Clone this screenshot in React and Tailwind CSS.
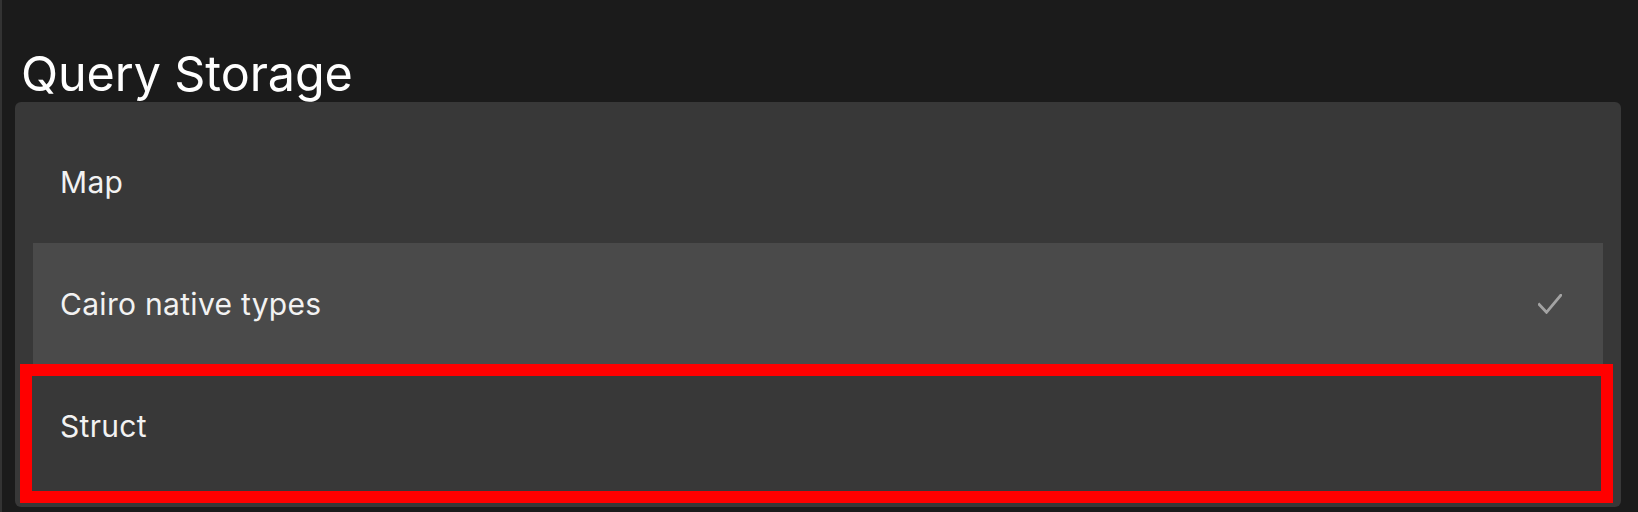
export default function App() {
  return (
    <div className="w-[1638px] h-[512px] bg-[#1b1b1b] overflow-hidden border-l-2 border-[#333333]" style={{ fontFamily: 'Inter, "Noto Sans", sans-serif' }}>
      <div className="pt-[45px] pl-[20px] pr-[17px]">
        <h1 className="text-[48.5px] leading-[57px] text-white font-normal -ml-[1px] tracking-[-0.1px]">Query Storage</h1>
        <div className="mt-[0px] bg-[#383838] rounded-[6px] pt-[19px] px-[18px] pb-[20px] -ml-[7px] relative">
          <div className="h-[122px] flex items-center px-[27px] text-[30px] tracking-[0.3px] text-[#f2f2f2]">Map</div>
          <div className="h-[122px] flex items-center justify-between pl-[27px] pr-[41px] text-[30px] tracking-[0.3px] text-[#f2f2f2] bg-[#4a4a4a]">
            <span>Cairo native types</span>
            <svg width="24" height="20" viewBox="0 0 24 20" fill="none">
              <path d="M1.2 10.5 L8.5 18.3 L22.8 1.2" stroke="#a3a3a3" strokeWidth="2.8" strokeLinecap="square" />
            </svg>
          </div>
          <div className="h-[122px] flex items-center px-[27px] text-[30px] tracking-[0.3px] text-[#f2f2f2]">Struct</div>
          <div className="absolute left-[5px] right-[8px] top-[262px] h-[139px] border-[12px] border-[#ff0000] pointer-events-none" />
        </div>
      </div>
    </div>
  );
}
